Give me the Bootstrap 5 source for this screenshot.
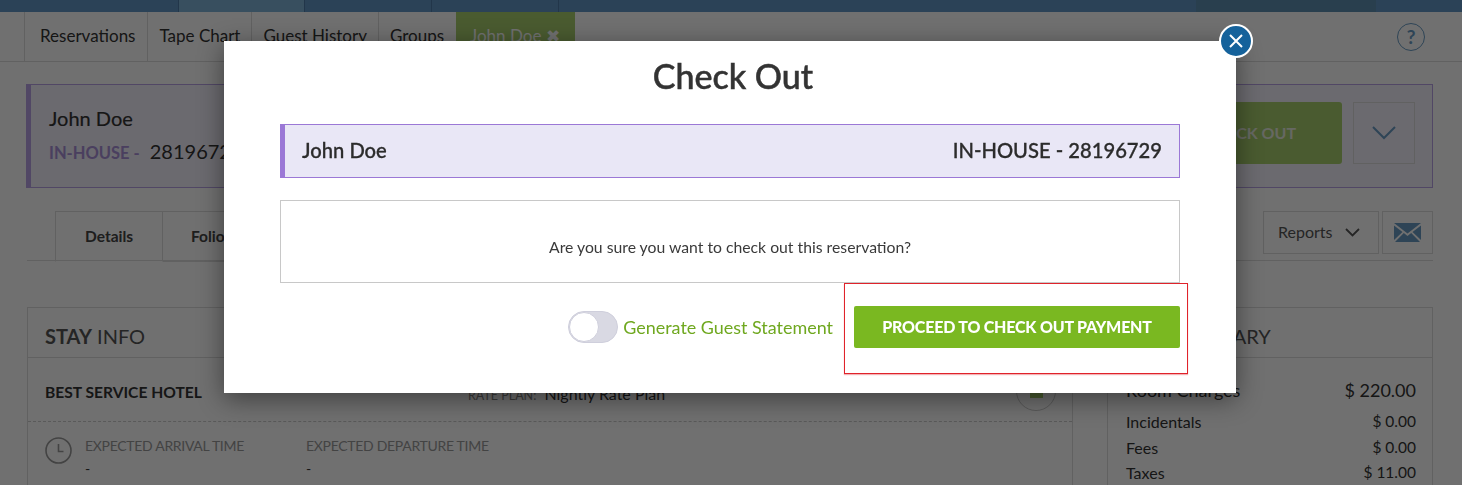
<!DOCTYPE html>
<html lang="en">
<head>
  <meta charset="UTF-8" />
  <meta name="viewport" content="width=device-width, initial-scale=1.0"/>
  <title>Check Out</title>
  <link href="https://cdn.jsdelivr.net/npm/bootstrap@5.3.3/dist/css/bootstrap.min.css" rel="stylesheet">
  <style>
    html, body { height: 485px; overflow: hidden; }
    body { font-family: Lato, "Open Sans", sans-serif; color: #333; background: #fff; }

    .top-strip { height: 12px; background: #6296c6; }
    .strip-seg { border-right: 1px solid #4f7ca8; }
    .seg-a { width: 179px; }
    .seg-b { width: 126px; background: #7fb4d8; }
    .seg-c, .seg-d { width: 127px; }
    .seg-e { width: 637px; border: 0; }
    .seg-f { width: 180px; background: #5f8fb1; border: 0; }

    .tab-bar { height: 50px; padding-left: 24px; border-bottom: 1px solid #ddd; }
    .tab-item { padding: 0 11px; font-size: 17px; line-height: 48px; color: #333; border-left: 1px solid #ddd; text-decoration: none; }
    .tab-item.first-tab { padding: 0 12px 0 15px; }
    .tab-item.tab-groups { padding-right: 12px; }
    .tab-active { width: 119px; padding: 0 0 0 14px; border: 0; background: #a8d06e; color: #fff; }
    .help-ring { width: 28px; height: 28px; margin: 11px 37px 0 0; border: 1.5px solid #6a9cc4; border-radius: 50%; color: #6a9cc4; font-size: 19px; font-weight: 700; line-height: 25px; text-align: center; }

    .guest-panel { height: 104px; margin: 22px 29px 0 26px; padding: 17px 17px 17px 18px; background: #f3f1fc; border: 1px solid #b9a2e6; border-left-width: 5px; }
    .guest-name { font-size: 20px; line-height: 32px; -webkit-text-stroke: .2px; }
    .guest-state { font-size: 16.5px; font-weight: 700; color: #a88fd8; line-height: 38px; }
    .guest-num { font-size: 20px; margin-left: 10px; }
    .panel-go { width: 343px; height: 62px; background: #a8d06e; color: #e8ecdf; border-radius: 3px; font-size: 16px; font-weight: 700; line-height: 62px; text-align: right; padding-right: 46px; }
    .panel-drop { width: 62px; height: 62px; margin-left: 11px; border: 1px solid #ddd; }

    .sub-tabs { height: 50px; margin: 23px 29px 0 27px; border-bottom: 1px solid #ddd; }
    .sub-tab { height: 51px; border: 1px solid #ddd; font-size: 15.5px; font-weight: 700; line-height: 48px; color: #444; }
    .tab-details { width: 108px; margin-left: 28px; padding-left: 29px; border-bottom-color: #fff; }
    .tab-folio { width: 110px; border-left: 0; padding-left: 28px; }
    .report-btn { width: 116px; height: 43px; border: 1px solid #ddd; font-size: 16px; line-height: 39px; color: #555; padding-left: 14px; }
    .report-chev { margin: 16px 0 0 13px; }
    .mail-btn { width: 51px; height: 43px; margin-left: 3px; border: 1px solid #ddd; }

    .info-row { margin: 46px 29px 0 27px; gap: 34px; }
    .box-left { width: 1046px; border: 1px solid #ddd; border-bottom: 0; height: 200px; }
    .box-right { width: 326px; border: 1px solid #ddd; border-bottom: 0; height: 200px; }
    .box-title { height: 50px; padding-left: 17px; font-size: 20px; line-height: 56px; color: #555; border-bottom: 1px solid #ddd; }
    .hotel-row { height: 64px; padding: 0 17px; border-bottom: 1px dashed #ccc; }
    .hotel-name { font-size: 15.6px; font-weight: 700; line-height: 68px; }
    .plan-cell { position: absolute; left: 440px; top: 74px; font-size: 16px; white-space: nowrap; }
    .plan-cell small { font-size: 12.5px; color: #888; margin-right: 4px; }
    .plan-dot { position: absolute; left: 988px; top: 63px; width: 40px; height: 40px; border: 1px solid #ccc; border-radius: 50%; }
    .plan-dot i { display: block; width: 13px; height: 13px; margin: 13px; background: #a8d06e; }
    .time-row { padding: 15px 17px 0 17px; }
    .time-lbl { font-size: 14px; color: #999; letter-spacing: -.3px; line-height: 17px; }
    .time-val { font-size: 14px; line-height: 30px; }
    .col-arrive { width: 221px; margin-left: 13px; }
    .sum-body { padding: 19px 16px 0 18px; font-size: 16px; line-height: 25.5px; }
    .sum-main { font-size: 18px; line-height: 27px; margin-bottom: 5px; }
    .sum-amt { font-size: 15.5px; }

    .dim-layer { position: fixed; inset: 0; background: rgba(0, 0, 0, .56); }
    .checkout-modal { position: absolute; left: 224px; top: 41px; width: 1012px; height: 352px; padding: 0 56px; background: #fff; box-shadow: 0 6px 24px rgba(0, 0, 0, .45); }
    .modal-heading { margin: 14px 0 0; padding-left: 6px; font-size: 34px; font-weight: 500; line-height: 42px; text-align: center; color: #333; -webkit-text-stroke: .5px; }
    .modal-guest { height: 54px; margin-top: 27px; padding: 0 17px 2px 17px; background: #e9e7f6; border: 1px solid #9b78d6; border-left-width: 5px; font-size: 20.2px; font-weight: 500; color: #2c2c2c; -webkit-text-stroke: .3px; }
    .confirm-box { height: 83px; margin-top: 22px; padding-top: 10px; border: 1px solid #c8c8c8; font-size: 15.75px; color: #3a3a3a; }
    .modal-foot { margin-top: 23px; height: 42px; }
    .pill-toggle { width: 50px; height: 32px; background: #d9d9e3; border: 1px solid #cfcfdc; border-radius: 16px; margin-right: 5px; }
    .pill-toggle i { display: block; width: 30px; height: 30px; background: #fff; border-radius: 50%; border: 1px solid #cfcfdc; }
    .stmt-label { font-size: 17.95px; color: #6fa81f; margin-right: 21px; }
    .go-btn { width: 326px; height: 42px; padding: 0; background: #7ab821; border: 0; border-radius: 2px; color: #fff; font-size: 16px; font-weight: 900; letter-spacing: -.2px; }
    .go-btn:hover { background: #7ab821; color: #fff; }
    .red-mark { position: absolute; left: 620px; top: 242px; width: 344px; height: 91px; border: 1px solid #e0232b; box-shadow: 0 1px 1px rgba(224, 35, 43, .35); pointer-events: none; }
    .close-dot { position: absolute; right: -17px; top: -17px; width: 34px; height: 34px; padding: 0; background: #15629b; border: 2px solid #fff; border-radius: 50%; }
  </style>
</head>
<body>
  <div class="top-strip d-flex">
    <div class="strip-seg seg-a"></div>
    <div class="strip-seg seg-b"></div>
    <div class="strip-seg seg-c"></div>
    <div class="strip-seg seg-d"></div>
    <div class="strip-seg seg-e"></div>
    <div class="strip-seg seg-f"></div>
  </div>

  <nav class="tab-bar d-flex">
    <a class="tab-item first-tab" href="#">Reservations</a>
    <a class="tab-item" href="#">Tape Chart</a>
    <a class="tab-item" href="#">Guest History</a>
    <a class="tab-item tab-groups" href="#">Groups</a>
    <a class="tab-item tab-active" href="#">John Doe &#10006;</a>
    <div class="help-ring ms-auto">?</div>
  </nav>

  <section class="guest-panel d-flex justify-content-between">
    <div>
      <div class="guest-name">John Doe</div>
      <div><span class="guest-state">IN-HOUSE -</span><span class="guest-num">28196729</span></div>
    </div>
    <div class="d-flex">
      <div class="panel-go">CHECK OUT</div>
      <div class="panel-drop d-flex align-items-center justify-content-center">
        <svg width="24" height="14" viewBox="0 0 24 14" fill="none" stroke="#6a9cc4" stroke-width="2"><path d="M1 1l11 11L23 1"/></svg>
      </div>
    </div>
  </section>

  <div class="sub-tabs d-flex">
    <div class="sub-tab tab-details">Details</div>
    <div class="sub-tab tab-folio">Folio</div>
    <div class="report-btn ms-auto d-flex">Reports
      <svg class="report-chev" width="15" height="9" viewBox="0 0 15 9" fill="none" stroke="#555" stroke-width="1.8"><path d="M1 1l6.5 6.5L14 1"/></svg>
    </div>
    <div class="mail-btn d-flex align-items-center justify-content-center">
      <svg width="27" height="19" viewBox="0 0 27 19"><path fill="#6a9cc4" d="M0 0h27L13.5 10.5zM0 2.5v14.5l8.5-8zM27 2.5v14.5l-8.5-8zM9.8 10l3.7 3 3.7-3 8.8 9H1z"/></svg>
    </div>
  </div>

  <div class="info-row d-flex">
    <div class="box-left position-relative">
      <div class="box-title"><b>STAY</b> INFO</div>
      <div class="hotel-row"><div class="hotel-name">BEST SERVICE HOTEL</div></div>
      <div class="plan-cell"><small>RATE PLAN:</small> Nightly Rate Plan</div>
      <div class="plan-dot"><i></i></div>
      <div class="time-row d-flex">
        <svg width="27" height="27" viewBox="0 0 27 27" fill="none" stroke="#999" stroke-width="1.6"><circle cx="13.5" cy="13.5" r="12.5"/><path d="M13.5 7v7.5h5"/></svg>
        <div class="col-arrive">
          <div class="time-lbl">EXPECTED ARRIVAL TIME</div>
          <div class="time-val">-</div>
        </div>
        <div>
          <div class="time-lbl">EXPECTED DEPARTURE TIME</div>
          <div class="time-val">-</div>
        </div>
      </div>
    </div>
    <div class="box-right">
      <div class="box-title"><b>BILL</b> SUMMARY</div>
      <div class="sum-body">
        <div class="sum-main d-flex justify-content-between"><span>Room Charges</span><span>$ 220.00</span></div>
        <div class="d-flex justify-content-between"><span>Incidentals</span><span class="sum-amt">$ 0.00</span></div>
        <div class="d-flex justify-content-between"><span>Fees</span><span class="sum-amt">$ 0.00</span></div>
        <div class="d-flex justify-content-between"><span>Taxes</span><span class="sum-amt">$ 11.00</span></div>
      </div>
    </div>
  </div>

  <div class="dim-layer"></div>

  <div class="checkout-modal">
    <button class="close-dot d-flex align-items-center justify-content-center" type="button" aria-label="Close">
      <svg width="14" height="14" viewBox="0 0 14 14" fill="none" stroke="#fff" stroke-width="2"><path d="M1 1l12 12M13 1L1 13"/></svg>
    </button>
    <h2 class="modal-heading">Check Out</h2>
    <div class="modal-guest d-flex align-items-center justify-content-between">
      <span>John Doe</span>
      <span>IN-HOUSE - 28196729</span>
    </div>
    <div class="confirm-box d-flex align-items-center justify-content-center">Are you sure you want to check out this reservation?</div>
    <div class="modal-foot d-flex align-items-center justify-content-end">
      <div class="pill-toggle"><i></i></div>
      <span class="stmt-label">Generate Guest Statement</span>
      <button class="btn go-btn" type="button">PROCEED TO CHECK OUT PAYMENT</button>
    </div>
    <div class="red-mark"></div>
  </div>

  <script src="https://cdn.jsdelivr.net/npm/bootstrap@5.3.3/dist/js/bootstrap.bundle.min.js"></script>
</body>
</html>
